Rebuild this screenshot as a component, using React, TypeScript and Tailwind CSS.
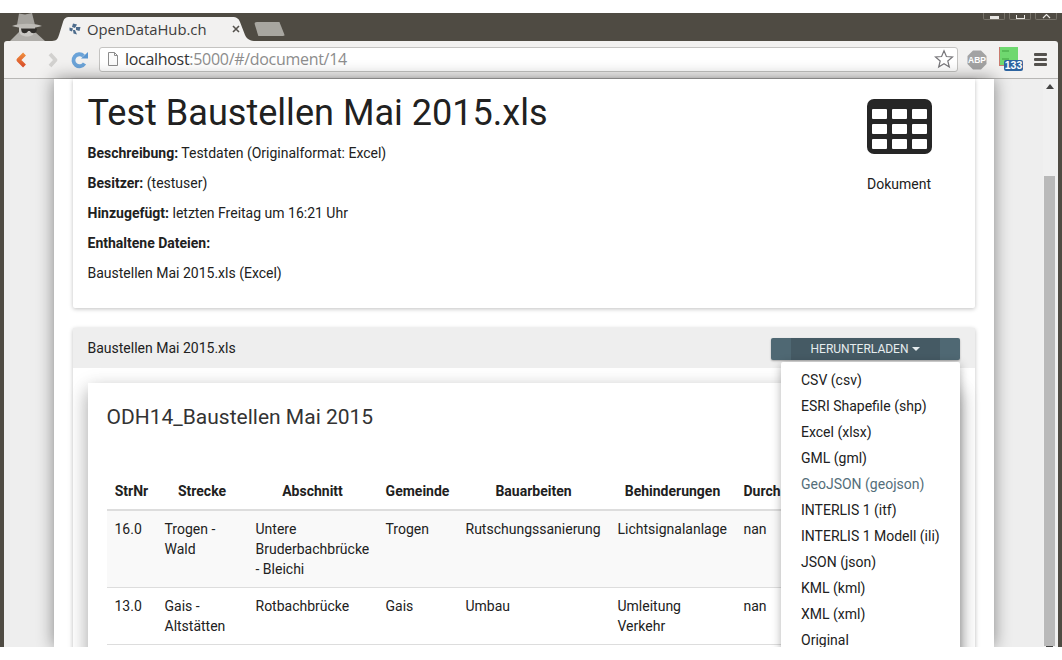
import React from 'react';

const formats = [
  'CSV (csv)',
  'ESRI Shapefile (shp)',
  'Excel (xlsx)',
  'GML (gml)',
  'GeoJSON (geojson)',
  'INTERLIS 1 (itf)',
  'INTERLIS 1 Modell (ili)',
  'JSON (json)',
  'KML (kml)',
  'XML (xml)',
  'Original',
];

const headers = ['StrNr', 'Strecke', 'Abschnitt', 'Gemeinde', 'Bauarbeiten', 'Behinderungen', 'Durch'];

const rows = [
  ['16.0', 'Trogen - Wald', 'Untere Bruderbachbrücke - Bleichi', 'Trogen', 'Rutschungssanierung', 'Lichtsignalanlage', 'nan'],
  ['13.0', 'Gais - Altstätten', 'Rotbachbrücke', 'Gais', 'Umbau', 'Umleitung Verkehr', 'nan'],
];

const Spy = () => (
  <svg viewBox="0 0 36 28" className="absolute left-[9px] top-0 w-[36px] h-[28px]">
    <path d="M1 28 L10 19 L26 19 L36 28 Z" fill="#b0aeaa" />
    <path d="M10 19 C12 25 24 25 26 19 L26 14 H10 Z" fill="#c9c7c3" />
    <path d="M10 0.500 L16 1.500 L23 0 L26 12 L8 12 Z" fill="#a5a39e" />
    <path d="M3 13 C10 10 26 10 33 13 C26 15.500 10 15.500 3 13 Z" fill="#bdbbb6" />
    <path d="M12 15.500 H28 L27.500 18 C27 21 22 21 21 18 H19 C18 21 13 21 12.500 18 Z" fill="#2f2d2a" />
  </svg>
);

const WindowButton = ({ children }: { children: React.ReactNode }) => (
  <div className="w-[22px] h-[7px] border border-t-0 border-[#77736a] rounded-b-[2px] flex justify-center items-end overflow-hidden">
    {children}
  </div>
);

const Tab = () => (
  <div className="absolute left-[52px] top-[4px] w-[206px] h-[24px]">
    <svg viewBox="0 0 206 24" className="absolute inset-0 w-[206px] h-[24px]">
      <path d="M0 24 C5 24 6 21 7 18 L11 5 C12 2 13 0 18 0 H180 C185 0 187 2 188 5 L193 18 C195 22 198 24 204 24 Z" fill="#f2f1f0" />
    </svg>
    <svg viewBox="0 0 12 12" className="absolute left-[17px] top-[6px] w-[12px] h-[12px]">
      <path d="M4 0.500 L8 1.500 L6 5 L3 4 Z M7 4 L11.500 4 L10.500 8 L7 7 Z M6 7 L8 11.500 L4.500 10.500 L4 7 Z M0.500 4.500 L4 5.500 L3 8.500 L0.500 7.500 Z" fill="#4d6c8c" />
    </svg>
    <span className="absolute left-[35px] top-[1px] text-[14.8px] leading-[22px] text-[#3d3d3d] font-['Open_Sans',sans-serif] whitespace-nowrap">
      OpenDataHub.ch
    </span>
    <svg viewBox="0 0 8 8" className="absolute left-[180px] top-[8px] w-[8px] h-[8px]">
      <path d="M1 1 L7 7 M7 1 L1 7" stroke="#55524d" strokeWidth="1.6" />
    </svg>
  </div>
);

const Toolbar = () => (
  <div className="relative ml-[4px] mr-[4px] h-[38px] bg-[#f2f1f0] rounded-t-[3px] border-b border-[#b8b7b5] flex items-center">
    <svg viewBox="0 0 12 16" className="ml-[11px] w-[12px] h-[16px] shrink-0">
      <defs>
        <linearGradient id="back" x1="0" y1="0" x2="0" y2="1">
          <stop offset="0" stopColor="#ee8a3c" />
          <stop offset="1" stopColor="#d9502a" />
        </linearGradient>
      </defs>
      <path d="M9.500 2 L3.500 8 L9.500 14" fill="none" stroke="url(#back)" strokeWidth="4" strokeLinejoin="round" />
    </svg>
    <svg viewBox="0 0 12 16" className="ml-[20px] w-[12px] h-[16px] shrink-0">
      <path d="M3 2 L8.500 8 L3 14" fill="none" stroke="#d2d1cf" strokeWidth="3.800" strokeLinejoin="round" />
    </svg>
    <svg viewBox="0 0 18 18" className="ml-[12px] w-[18px] h-[18px] shrink-0">
      <path d="M13.500 12.500 A6 6 0 1 1 12.500 4.800" fill="none" stroke="#6ba3d8" strokeWidth="3.800" />
      <path d="M10 7.500 H17 V1 Z" fill="#5b96d0" />
    </svg>
    <div className="ml-[10px] mb-[1px] w-[859px] h-[25px] bg-white border border-[#c4c3c1] rounded-[3px] flex items-center shrink-0">
      <svg viewBox="0 0 12 14" className="ml-[7px] w-[12px] h-[14px] shrink-0">
        <path d="M1.500 0.500 H7.500 L10.500 3.500 V13.500 H1.500 Z M7.500 0.500 V3.500 H10.500" fill="#fbfbfb" stroke="#8c8c8c" />
      </svg>
      <span className="ml-[6px] text-[16px] leading-[22px] font-['Open_Sans',sans-serif] whitespace-nowrap tracking-[-0.3px] text-[#8d8d8d]">
        <span className="text-[#333]">localhost</span>:5000/#/document/14
      </span>
      <svg viewBox="0 0 20 20" className="ml-auto mr-[3px] w-[20px] h-[20px] shrink-0">
        <path d="M10 1.800 L12.400 7.500 L18.500 8 L13.800 12 L15.300 18 L10 14.800 L4.700 18 L6.200 12 L1.500 8 L7.600 7.500 Z" fill="#fff" stroke="#77767a" strokeWidth="1.200" />
      </svg>
    </div>
    <svg viewBox="0 0 20 20" className="ml-[9px] w-[20px] h-[20px] shrink-0">
      <path d="M6 0.500 H14 L19.500 6 V14 L14 19.500 H6 L0.500 14 V6 Z" fill="#a3a3a3" />
      <text x="10" y="13.300" textAnchor="middle" fontSize="8.500" fontWeight="700" fill="#fff" fontFamily="Liberation Sans, sans-serif">ABP</text>
    </svg>
    <div className="relative ml-[12px] w-[24px] h-[25px] shrink-0">
      <div className="absolute left-0 top-0 w-[19px] h-[19px] bg-[#6fd86f] border-b border-l border-[#c97a6e]" />
      <div className="absolute left-[3px] top-[3px] w-[7px] h-[10px] border-y-2 border-[#58bd58]" />
      <div className="absolute left-[5px] top-[13px] w-[19px] h-[11px] bg-[#2d64a0] rounded-[2px] text-white text-[10.5px] leading-[11px] font-bold text-center font-['Liberation_Sans',sans-serif]">
        133
      </div>
    </div>
    <div className="ml-[11px] w-[13px] flex flex-col gap-[2px] shrink-0">
      <div className="h-[3px] bg-[#55524e] rounded-[1px]" />
      <div className="h-[3px] bg-[#55524e] rounded-[1px]" />
      <div className="h-[3px] bg-[#55524e] rounded-[1px]" />
    </div>
  </div>
);

const TableIcon = () => (
  <svg viewBox="0 0 65 55" className="w-[65px] h-[55px]">
    <rect width="65" height="55" rx="7" fill="#262626" />
    {[10, 25, 40].map((y) =>
      [5, 25, 45].map((x) => <rect key={`${x}-${y}`} x={x} y={y} width="15" height="10" rx="1" fill="#fff" />),
    )}
  </svg>
);

const Line = ({ label, value }: { label: string; value?: string }) => (
  <p className="mb-[10px] leading-[20px]">
    <strong className="font-bold">{label}</strong>
    {value ? ` ${value}` : ''}
  </p>
);

export default function App() {
  return (
    <div className="w-[1062px] h-[660px] bg-white pt-[13px] overflow-hidden text-[14px] text-[#212121] font-['Roboto',sans-serif]">
      <div className="relative h-[634px] bg-[#4f4b43] overflow-hidden">
        <div className="relative h-[28px]">
          <Spy />
          <Tab />
          <div className="absolute left-[254px] top-[9px] w-[31px] h-[14px] bg-[#a8a6a0] rounded-t-[3px] rounded-b-[2px] [clip-path:polygon(0_0,82%_0,100%_100%,14%_100%)]" />
          <div className="absolute right-[5px] top-0 flex gap-[4px]">
            <WindowButton><div className="w-[9px] h-[3px] bg-[#e8e6e2]" /></WindowButton>
            <WindowButton><div className="w-[9px] h-[4px] border border-t-0 border-[#e8e6e2]" /></WindowButton>
            <WindowButton>
              <svg viewBox="0 0 9 5" className="w-[9px] h-[5px]">
                <path d="M1 -3 L8 4 M8 -3 L1 4" stroke="#e8e6e2" strokeWidth="1.2" />
              </svg>
            </WindowButton>
          </div>
        </div>
        <Toolbar />
        <div className="flex h-[568px] mx-[4px] bg-[#eeeeee]">
          <div className="w-[50px] shrink-0" />
          <main className="relative z-10 w-[940px] shrink-0 bg-white shadow-[0_0_16px_rgba(0,0,0,0.45)] px-[19px]">
            <section className="bg-white rounded-b-[2px] shadow-[0_1px_4px_rgba(0,0,0,0.25)] pl-[14.5px] pr-[15px] pt-[14px] h-[229px] flex">
              <div className="flex-1">
                <h1 className="text-[36.1px] leading-[40px] mb-[10px] text-[#212121]">Test Baustellen Mai 2015.xls</h1>
                <Line label="Beschreibung:" value="Testdaten (Originalformat: Excel)" />
                <Line label="Besitzer:" value="(testuser)" />
                <Line label="Hinzugefügt:" value="letzten Freitag um 16:21 Uhr" />
                <Line label="Enthaltene Dateien:" />
                <p className="leading-[20px]">Baustellen Mai 2015.xls (Excel)</p>
              </div>
              <div className="w-[120px] mr-[1px] mt-[6px] flex flex-col items-center">
                <TableIcon />
                <span className="mt-[20px] leading-[20px]">Dokument</span>
              </div>
            </section>
            <section className="relative mt-[20px] rounded-t-[2px] shadow-[0_1px_4px_rgba(0,0,0,0.25)] bg-white">
              <header className="h-[40px] bg-[#eeeeee] pl-[14.5px] pr-[15px] flex items-center justify-between">
                <span>Baustellen Mai 2015.xls</span>
                <button className="mt-[2px] w-[189px] h-[22px] bg-[#4f6873] rounded-[2px] flex justify-center shadow-[0_1px_2px_rgba(0,0,0,0.3)]">
                  <span className="w-[149px] h-full bg-[#455a64] text-[#e6ecee] text-[12px] leading-[22px] flex items-center justify-center gap-[4px]">
                    HERUNTERLADEN
                    <span className="w-0 h-0 border-x-[4px] border-x-transparent border-t-[4px] border-t-[#e6ecee]" />
                  </span>
                </button>
              </header>
              <div className="px-[15px] pt-[15px] h-[300px]">
                <div className="bg-white h-[400px] shadow-[0_8px_17px_rgba(0,0,0,0.2),0_6px_20px_rgba(0,0,0,0.19)] overflow-hidden">
                  <h2 className="px-[18.5px] pt-[20px] text-[21px] leading-[28px] text-[#333]">ODH14_Baustellen Mai 2015</h2>
                  <table className="mt-[41px] ml-[18.5px] table-fixed border-collapse w-[682px]">
                    <colgroup>
                      <col className="w-[50px]" />
                      <col className="w-[91px]" />
                      <col className="w-[130px]" />
                      <col className="w-[80px]" />
                      <col className="w-[152px]" />
                      <col className="w-[126px]" />
                      <col className="w-[53px]" />
                    </colgroup>
                    <thead>
                      <tr className="border-b-2 border-[#dddddd]">
                        {headers.map((h) => (
                          <th key={h} className="px-[8px] h-[38px] font-bold text-center leading-[20px] whitespace-nowrap text-[#212121]">
                            {h}
                          </th>
                        ))}
                      </tr>
                    </thead>
                    <tbody>
                      {rows.map((row, i) => (
                        <tr key={row[0]} className={`border-b border-[#dddddd] ${i === 0 ? 'bg-[#f9f9f9]' : 'bg-white'}`}>
                          {row.map((cell, j) => (
                            <td key={j} className="p-[8px] align-top leading-[20px]">
                              {cell}
                            </td>
                          ))}
                        </tr>
                      ))}
                    </tbody>
                  </table>
                </div>
              </div>
              <ul className="absolute z-20 right-[15px] top-[34px] w-[179px] h-[300px] bg-white rounded-t-[2px] shadow-[0_2px_10px_rgba(0,0,0,0.3)] pt-[5px]">
                {formats.map((f) => (
                  <li key={f} className={`h-[26px] leading-[26px] pl-[20px] whitespace-nowrap ${f.startsWith('GeoJSON') ? 'text-[#546e7a]' : 'text-[#212121]'}`}>
                    {f}
                  </li>
                ))}
              </ul>
            </section>
          </main>
          <div className="w-[49px] shrink-0" />
          <div className="w-[15px] shrink-0 bg-[#f0f0f0] relative">
            <div className="absolute left-[3px] top-[5px] w-0 h-0 border-x-[4px] border-x-transparent border-b-[5px] border-b-[#444]" />
            <div className="absolute left-[1px] right-[3px] top-[97px] bottom-[1px] bg-[#b9b9b9]" />
            <div className="absolute left-[3px] w-[7px] bottom-0 h-[1px] bg-[#444]" />
          </div>
        </div>
      </div>
    </div>
  );
}
